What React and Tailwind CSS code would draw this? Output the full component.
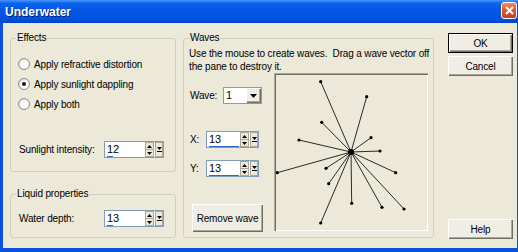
import React from "react";

const star = [
  [320.7, 81.7],
  [366.7, 96.7],
  [321.7, 122.3],
  [371, 137.7],
  [299, 140],
  [380, 151],
  [277.3, 172.7],
  [326, 168.3],
  [395.7, 172.7],
  [328.7, 183.7],
  [351.7, 203.3],
  [382, 207.3],
  [404, 209],
  [320.7, 223],
];

const btn =
  "flex items-center justify-center bg-[#F0EEE4] shadow-[inset_1px_1px_#fff,inset_-1px_-1px_#716F64,inset_-2px_-2px_#ACA899]";

const Radio = ({ label, checked }) => (
  <div className="flex h-[20px] items-center gap-[4px] pl-[7px]">
    <div className="flex h-[12px] w-[12px] items-center justify-center rounded-full border border-[#8E8F8F] bg-[radial-gradient(circle_at_60%_60%,_#fff_35%,_#CFCDC2_100%)]">
      {checked ? <div className="h-[4px] w-[4px] rounded-full bg-[#1A1A1A]" /> : null}
    </div>
    <span>{label}</span>
  </div>
);

const Tri = ({ down = true }) => (
  <svg width="5" height="3" viewBox="0 0 5 3">
    <path d={down ? "M0 0h5L2.5 3z" : "M0 3h5L2.5 0z"} fill="#000" />
  </svg>
);

const SpinBox = ({ value, width, bar }) => (
  <div className={`flex h-[17px] shrink-0 border border-[#7F9DB9] bg-white ${width}`}>
    <div className="flex flex-1 flex-col pl-[2px]">
      <span className="flex-1 text-[11px] leading-[14px]">{value}</span>
      <span className={`h-[2px] bg-[#316AC5] ${bar}`} />
    </div>
    <div className="flex w-[9px] flex-col bg-[#ECE9D8]">
      <div className="flex flex-1 items-center justify-center border border-[#ACA899]">
        <Tri down={false} />
      </div>
      <div className="flex flex-1 items-center justify-center border border-t-0 border-[#ACA899]">
        <Tri />
      </div>
    </div>
    <div className="ml-[1px] flex w-[8px] flex-col items-center justify-center gap-[1px] border border-[#ACA899] bg-[#ECE9D8]">
      <Tri />
      <div className="h-[1px] w-[5px] bg-black" />
    </div>
  </div>
);

const Group = ({ title, className, children }) => (
  <fieldset className={`m-0 min-w-0 shrink-0 rounded-[3px] border border-[#D0D0BF] p-0 ${className}`}>
    <legend className="ml-[5px] px-[1px] leading-[14px]">{title}</legend>
    {children}
  </fieldset>
);

export default function App() {
  return (
    <div className="flex h-[252px] w-[518px] flex-col overflow-hidden bg-[#0A52DD] font-['Liberation_Sans',Arial,sans-serif] text-[10px] tracking-[-0.15px] text-black">
      <div className="flex h-[23px] items-center justify-between bg-[linear-gradient(180deg,_#4A97FF_0%,_#0B63EC_14%,_#0356E6_50%,_#0054E3_80%,_#0043CB_100%)] pl-[5px] pr-[1px]">
        <span className="text-[12px] font-bold tracking-normal text-white [text-shadow:1px_1px_#0A1E6A]">
          Underwater
        </span>
        <div className="mb-[2px] flex h-[17px] w-[16px] items-center justify-center rounded-[3px] border border-white bg-[linear-gradient(180deg,_#F08A66_0%,_#E0552F_50%,_#C2401B_100%)]">
          <svg width="9" height="9" viewBox="0 0 9 9">
            <path d="M1 1l7 7M8 1l-7 7" stroke="#fff" strokeWidth="2" />
          </svg>
        </div>
      </div>

      <div className="mb-[4px] ml-[3px] mr-[1px] flex flex-1 bg-[#ECE9D8] pl-[7px] pt-[8px]">
        <div className="flex w-[166px] shrink-0 flex-col">
          <Group title="Effects" className="h-[141px]">
            <div className="mt-[9px]">
              <Radio label="Apply refractive distortion" />
              <Radio label="Apply sunlight dappling" checked />
              <Radio label="Apply both" />
            </div>
            <div className="mt-[27px] flex items-center pl-[8px]">
              <span className="w-[85px] shrink-0 whitespace-nowrap">Sunlight intensity:</span>
              <SpinBox value="12" width="w-[60px]" bar="w-[6px]" />
            </div>
          </Group>

          <Group title="Liquid properties" className="mt-[15px] h-[51px]">
            <div className="mt-[9px] flex items-center pl-[8px]">
              <span className="w-[85px] shrink-0 whitespace-nowrap">Water depth:</span>
              <SpinBox value="13" width="w-[60px]" bar="w-[6px]" />
            </div>
          </Group>
        </div>

        <Group title="Waves" className="ml-[7px] h-[207px] w-[251px]">
          <p className="mt-[2px] whitespace-pre pl-[5px] leading-[13px]">
            Use the mouse to create waves.  Drag a wave vector off
            <br />
            the pane to destroy it.
          </p>
          <div className="flex pl-[5px]">
            <div className="flex w-[85px] shrink-0 flex-col">
              <div className="mt-[14px] flex h-[17px] items-center pl-[1px]">
                <span className="w-[33px]">Wave:</span>
                <div className="flex h-[17px] w-[39px] border border-[#7F9DB9] bg-white">
                  <span className="flex-1 pl-[2px] text-[11px] leading-[15px]">1</span>
                  <div className={`w-[15px] ${btn}`}>
                    <svg width="7" height="4" viewBox="0 0 7 4">
                      <path d="M0 0h7L3.5 4z" fill="#000" />
                    </svg>
                  </div>
                </div>
              </div>
              <div className="mt-[27px] flex items-center pl-[1px]">
                <span className="w-[16px]">X:</span>
                <SpinBox value="13" width="w-[53px]" bar="w-[30px]" />
              </div>
              <div className="mt-[12px] flex items-center pl-[1px]">
                <span className="w-[16px]">Y:</span>
                <SpinBox value="13" width="w-[53px]" bar="w-[30px]" />
              </div>
              <button className={`ml-[3px] mt-[27px] h-[28px] w-[71px] ${btn}`}>
                Remove wave
              </button>
            </div>
            <div className="h-[158px] w-[154px] shrink-0 shadow-[inset_1px_1px_#ACA899,inset_2px_2px_#716F64,inset_-1px_-1px_#fff]">
              <svg width="154" height="158" viewBox="274 73 154 158">
                {star.map(([x, y], i) => (
                  <g key={i}>
                    <line x1="351" y1="152" x2={x} y2={y} stroke="#2A2A2A" strokeWidth="1" />
                    <circle cx={x} cy={y} r="1.6" fill="#000" />
                  </g>
                ))}
                <circle cx="351" cy="152" r="3" fill="#000" />
              </svg>
            </div>
          </div>
        </Group>

        <div className="ml-[14px] flex h-[208px] w-[65px] shrink-0 flex-col">
          <button className="mt-[2px] flex h-[20px] items-center justify-center border border-black bg-[#F0EEE4] shadow-[inset_1px_1px_#fff,inset_-1px_-1px_#716F64,inset_-2px_-2px_#ACA899]">
            OK
          </button>
          <button className={`mt-[3px] h-[20px] ${btn}`}>Cancel</button>
          <button className={`mt-auto h-[20px] ${btn}`}>Help</button>
        </div>
      </div>
    </div>
  );
}
